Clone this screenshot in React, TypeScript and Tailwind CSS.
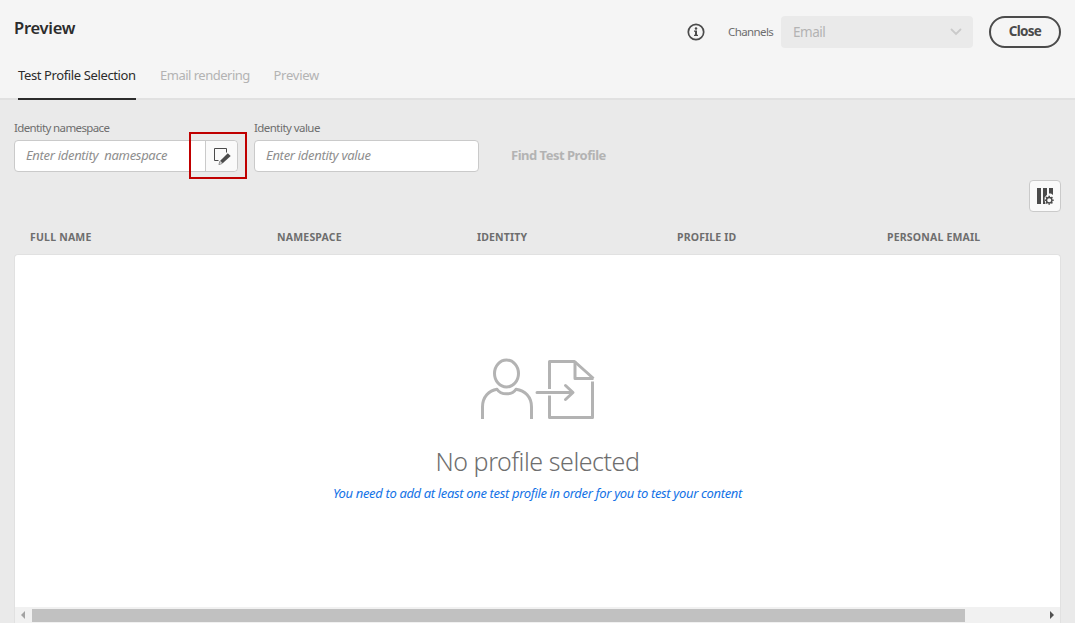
import React from 'react';

const columns = [
  { label: 'FULL NAME', cell: 'w-[247px] tracking-[0.2px]' },
  { label: 'NAMESPACE', cell: 'w-[200px] tracking-[0.2px]' },
  { label: 'IDENTITY', cell: 'w-[200px] tracking-[0.15px]' },
  { label: 'PROFILE ID', cell: 'w-[210px] tracking-[0.15px]' },
  { label: 'PERSONAL EMAIL', cell: 'w-[150px] tracking-[0.18px]' },
];

function InfoIcon() {
  return (
    <svg width="18" height="18" viewBox="0 0 18 18" fill="none">
      <circle cx="9" cy="9" r="7.7" stroke="#4b4b4b" strokeWidth="1.7" />
      <circle cx="9" cy="5.6" r="1.25" fill="#4b4b4b" />
      <path d="M7 7.6h3v4.2h1V13H7v-1.2h1V8.8H7z" fill="#4b4b4b" />
    </svg>
  );
}

function EditIcon() {
  return (
    <svg width="18" height="18" viewBox="0 0 18 18" fill="none">
      <path d="M5.500 13.500H1.500V1.500h12v4" stroke="#4b4b4b" />
      <path d="M14.800 6.200l2.900 2.900-8 7.200-2.500-2.500z" fill="#4b4b4b" />
      <path d="M6.900 14.300l2.200 2.200-3.200 1.100z" fill="#fafafa" stroke="#777" strokeWidth="0.8" />
    </svg>
  );
}

function ColumnSettingsIcon() {
  return (
    <svg width="18" height="18" viewBox="0 0 18 18" fill="none">
      <path d="M1 1h4v16H1zM7 1h4v6.800L8.600 10.500v3L9.500 17H7zM13 1h4v7l-2-1.400h-2z" fill="#4b4b4b" />
      <circle cx="13.200" cy="13.200" r="4.100" fill="#fafafa" />
      <circle cx="13.200" cy="13.200" r="2.700" stroke="#4b4b4b" strokeWidth="1.400" />
      <path d="M13.200 8.700v1.500M13.200 16.200v1.500M8.700 13.200h1.500M16.200 13.200h1.500M10 10l1.200 1.200M15.200 15.200l1.200 1.200M10 16.400l1.200-1.200M15.200 11.200l1.200-1.200" stroke="#4b4b4b" strokeWidth="1.500" />
    </svg>
  );
}

function ImportProfileIcon() {
  return (
    <svg width="116" height="62" viewBox="0 0 116 62" fill="none" stroke="#b3b3b3" strokeWidth="3" strokeLinejoin="round">
      <ellipse cx="26.500" cy="15.500" rx="12" ry="13.500" />
      <path d="M2.500 61V49C2.500 39 9 32.500 17 31.200c4 6.200 15 6.200 19 0C45 32.500 51.500 39 51.500 49v12" />
      <path d="M69.500 31V3.500h25l19 17M69.500 37.500V59.500h43V23.500" />
      <path d="M95 3.500v17h18.500" />
      <path d="M57 34.500h35M85.500 27.500l7.500 7-7.500 7" strokeLinecap="round" />
    </svg>
  );
}

export default function App() {
  return (
    <div className="flex h-[623px] w-[1075px] flex-col overflow-hidden bg-[#eaeaea] font-['Noto_Sans','Open_Sans',sans-serif] whitespace-nowrap text-[#4b4b4b]">
      <header className="flex h-[100px] shrink-0 flex-col border-b-2 border-[#e1e1e1] bg-[#f5f5f5]">
        <div className="flex h-[52px] shrink-0 items-start pl-[14px]">
          <h1 className="mt-[16px] w-[673px] text-[16.500px] leading-[24px] font-semibold tracking-[-0.25px] text-[#2c2c2c]">Preview</h1>
          <div className="mt-[23px] w-[41px]"><InfoIcon /></div>
          <span className="mt-[22px] w-[53px] text-[11.500px] leading-5 tracking-[-0.6px] text-[#6e6e6e]">Channels</span>
          <div className="mt-4 flex h-8 w-[192px] items-center justify-between rounded bg-[#eaeaea] pr-[11px] pl-3 text-[13.500px] tracking-[-0.5px] text-[#b3b3b3]">
            Email
            <svg width="12" height="8" viewBox="0 0 12 8" fill="none"><path d="M1.500 1.500L6 6l4.500-4.500" stroke="#cacaca" strokeWidth="1.800" strokeLinecap="round" /></svg>
          </div>
          <button className="mt-4 ml-4 h-8 w-[72px] rounded-full border-2 border-[#4b4b4b] pb-px text-[13.500px] leading-none font-bold tracking-[-0.7px]">Close</button>
        </div>
        <nav className="flex h-[48px] shrink-0 pl-[18px] text-[13px] leading-[46px] text-[#b3b3b3]">
          <span className="mr-6 h-[48px] w-[118px] border-b-2 border-[#2c2c2c] tracking-[-0.38px] text-[#2c2c2c]">Test Profile Selection</span>
          <span className="mr-[23.500px] w-[90px] tracking-[-0.5px]">Email rendering</span>
          <span className="tracking-[-0.25px]">Preview</span>
        </nav>
      </header>

      <section className="flex h-[80px] shrink-0 pl-[14px]">
        <div className="w-[240px] pt-[19px]">
          <label className="block h-[21px] text-[11.500px] leading-[18px] tracking-[-0.62px] text-[#6e6e6e]">Identity namespace</label>
          <div className="relative flex h-8 w-[224px] rounded border border-[#cacaca] bg-white">
            <span className="w-[190px] pl-[11px] text-[13px] leading-[28px] tracking-[-0.31px] whitespace-pre text-[#8e8e8e] italic">{'Enter identity  namespace'}</span>
            <button className="flex flex-1 items-center justify-center rounded-r border-l border-[#cacaca] bg-[#fafafa]"><EditIcon /></button>
            <div className="absolute top-[-9px] left-[174px] h-[47px] w-[58px] border-2 border-[#c00000]" />
          </div>
        </div>
        <div className="w-[257px] pt-[19px]">
          <label className="block h-[21px] text-[11.500px] leading-[18px] tracking-[-0.55px] text-[#6e6e6e]">Identity value</label>
          <div className="h-8 w-[225px] rounded border border-[#cacaca] bg-white pl-[11px] text-[13px] leading-[28px] tracking-[-0.3px] text-[#8e8e8e] italic">Enter identity value</div>
        </div>
        <span className="mt-[45px] text-[13px] leading-5 font-bold tracking-[-0.5px] text-[#b3b3b3]">Find Test Profile</span>
      </section>

      <div className="flex h-8 shrink-0 justify-end pr-[14px]">
        <button className="flex h-8 w-8 items-center justify-center rounded border border-[#cacaca] bg-[#fafafa]"><ColumnSettingsIcon /></button>
      </div>

      <div className="flex h-[42px] shrink-0 pt-[16px] pl-[30px] text-[10.500px] leading-[18px] font-bold text-[#6e6e6e]">
        {columns.map((c) => <span key={c.label} className={c.cell}>{c.label}</span>)}
      </div>

      <main className="mx-[14px] flex h-[369px] flex-col rounded-t border border-b-0 border-[#e1e1e1] bg-white">
        <div className="flex h-[352px] shrink-0 flex-col items-center pt-[103px]">
          <ImportProfileIcon />
          <h2 className="mt-[23px] text-[25px] leading-[36px] font-light tracking-[-0.45px] text-[#6e6e6e]">No profile selected</h2>
          <p className="mt-[4px] text-[13px] leading-[20px] tracking-[-0.35px] text-[#1473e6] italic">You need to add at least one test profile in order for you to test your content</p>
        </div>
        <div className="flex h-4 shrink-0 items-center justify-between bg-[#f1f1f1] pr-[6px] pl-[6px]">
          <svg width="4" height="8" viewBox="0 0 4 8"><path d="M4 0v8L0 4z" fill="#a3a3a3" /></svg>
          <div className="mr-auto ml-[7px] h-[13px] w-[933px] bg-[#c1c1c1]" />
          <svg width="4" height="8" viewBox="0 0 4 8"><path d="M0 0v8l4-4z" fill="#505050" /></svg>
        </div>
      </main>
    </div>
  );
}
